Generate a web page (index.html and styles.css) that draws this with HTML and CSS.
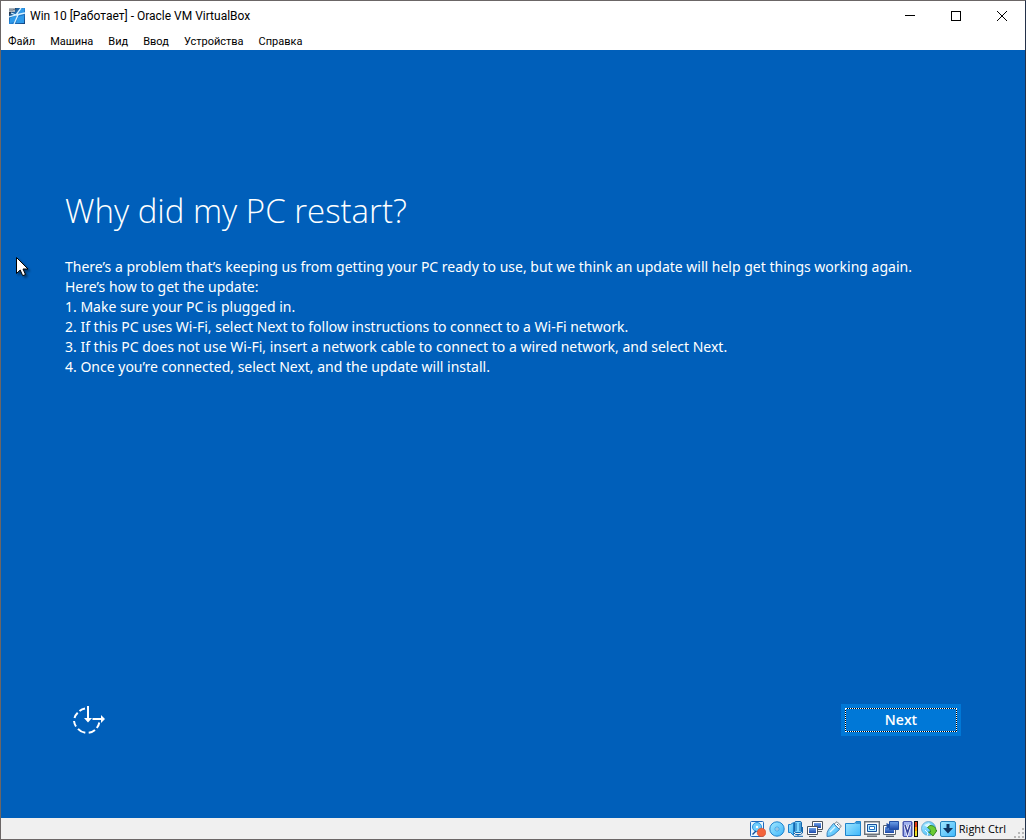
FILE: index.html
```
<!DOCTYPE html>
<html lang="ru">
<head>
  <meta charset="UTF-8" />
  <meta name="viewport" content="width=device-width, initial-scale=1.0"/>
  <title>Win 10 [Работает] - Oracle VM VirtualBox</title>
  <link rel="stylesheet" href="styles.css">
</head>
<body>
  <div class="window">
    <header class="title-bar">
      <svg class="app-icon" viewBox="0 0 16 16" aria-hidden="true">
        <defs>
          <linearGradient id="winBg" x1="0" y1="0" x2="1" y2="1">
            <stop offset="0" stop-color="#1c2c42"/>
            <stop offset="0.5" stop-color="#2388df"/>
            <stop offset="1" stop-color="#123e78"/>
          </linearGradient>
        </defs>
        <rect width="16" height="16" fill="#24364e"/>
        <path d="M7 0h9v16H0V7z" fill="url(#winBg)"/>
        <path d="M11 1l4-1v5l-5 2zM1 10l5-2 2 1-3 5-4 1zM9 9l6-2v8l-8 0z" fill="#2f9bea"/>
        <path d="M2 5l5 2 5-7M0 9l7-2 9-2M9 7l-4 9" fill="none" stroke="#d8f2ff" stroke-width="1.3"/>
        <rect width="6" height="4" fill="#aeb6bd"/>
        <path d="M1 1v2M3 1v2M4 1.500h2" stroke="#59636e" stroke-width="0.700"/>
      </svg>
      <span class="title">Win 10 [Работает] - Oracle VM VirtualBox</span>
      <div class="window-controls">
        <button type="button" aria-label="Свернуть">
          <svg viewBox="0 0 10 10" shape-rendering="crispEdges"><path d="M0 4.500h10" stroke="#000"/></svg>
        </button>
        <button type="button" aria-label="Развернуть">
          <svg viewBox="0 0 10 10" shape-rendering="crispEdges"><path d="M.5.5h9v9h-9z" fill="none" stroke="#000"/></svg>
        </button>
        <button type="button" aria-label="Закрыть">
          <svg viewBox="0 0 10 10"><path d="M0 0l10 10M10 0L0 10" stroke="#000"/></svg>
        </button>
      </div>
    </header>

    <nav class="menu-bar">
      <a href="#">Файл</a>
      <a href="#">Машина</a>
      <a href="#">Вид</a>
      <a href="#">Ввод</a>
      <a href="#">Устройства</a>
      <a href="#">Справка</a>
    </nav>

    <main class="screen" lang="en">
      <h1>Why did my PC restart?</h1>
      <p>There’s a problem that’s keeping us from getting your PC ready to use, but we think an update will help get things working again.</p>
      <p>Here’s how to get the update:</p>
      <p>1. Make sure your PC is plugged in.</p>
      <p>2. If this PC uses Wi-Fi, select Next to follow instructions to connect to a Wi-Fi network.</p>
      <p>3. If this PC does not use Wi-Fi, insert a network cable to connect to a wired network, and select Next.</p>
      <p>4. Once you’re connected, select Next, and the update will install.</p>

      <div class="actions">
        <button type="button" class="ease-button" aria-label="Ease of Access">
          <svg viewBox="0 0 34 30" fill="none" stroke="#fff" stroke-width="2">
            <path d="M14 3.500A12.500 12.500 0 0 0 8.500 6M6.700 7.800A12.500 12.500 0 0 0 3.500 13M3 16A12.500 12.500 0 0 0 5 21.500M7 23.800A12.500 12.500 0 0 0 14.300 27.800M17.700 27.800A12.500 12.500 0 0 0 24 25M25.800 23A12.500 12.500 0 0 0 28.300 17.500"/>
            <path d="M17 1v13M21.500 14H31"/>
            <path d="M13 13h8l-4 4.500zM30 10v8l4-4z" fill="#fff" stroke="none"/>
          </svg>
        </button>
        <button type="button" class="next-button"><span>Next</span></button>
      </div>

      <svg class="cursor" viewBox="0 0 14 20" aria-hidden="true">
        <path d="M.5.5v16l3.700-3.500 2.500 5.700 2.800-1.200L7 12h5z" fill="#fff" stroke="#000"/>
      </svg>
    </main>

    <footer class="status-bar">
      <!-- shared gradients for the device icons -->
      <svg class="defs" aria-hidden="true">
        <defs>
          <linearGradient id="sky" x1="0" y1="0" x2="1" y2="1">
            <stop offset="0" stop-color="#a5e8ff"/>
            <stop offset="1" stop-color="#3cb6fa"/>
          </linearGradient>
          <linearGradient id="navy" x1="0" y1="0" x2="0" y2="1">
            <stop offset="0" stop-color="#6fa2ea"/>
            <stop offset="1" stop-color="#1c48a8"/>
          </linearGradient>
        </defs>
      </svg>

      <svg viewBox="0 0 16 16" role="img" aria-label="Hard disk">
        <rect x="0.500" y="0.500" width="13" height="15" rx="1" fill="#e9f7ff" stroke="#1d68bb"/>
        <circle cx="7" cy="6" r="4.500" fill="#6fcdfc" stroke="#2e91dc"/>
        <circle cx="7" cy="6" r="1.200" fill="#fff"/>
        <path d="M2.500 13.500L6 10" stroke="#164f96" stroke-width="1.500"/>
        <circle cx="11.500" cy="11.500" r="4.300" fill="#f3643c" stroke="#d24424" stroke-width="0.600"/>
      </svg>
      <svg viewBox="0 0 16 16" role="img" aria-label="Optical disk">
        <circle cx="8" cy="8" r="7.200" fill="url(#sky)" stroke="#1c82cd"/>
        <circle cx="8" cy="8" r="2" fill="#e2f8ff" stroke="#2b91da" stroke-width="0.800"/>
        <circle cx="8" cy="8" r="0.700" fill="#1769ac"/>
      </svg>
      <svg viewBox="0 0 16 16" role="img" aria-label="Audio">
        <path d="M.5 3.500h2l3-2v13l-3-3h-2z" fill="url(#sky)" stroke="#1c7cc6"/>
        <rect x="6.500" y="0.500" width="7" height="11" rx="1.500" fill="#7ed6ff" stroke="#1467ad"/>
        <path d="M7 3h2M7 5h2M7 7h2M7 9h2M11 3h2M11 5h2M11 7h2M11 9h2" stroke="#1467ad"/>
        <path d="M14.500 6v6l-2 1.500h-5L6 12M10 13v2M6 15.300h9" fill="none" stroke="#1467ad"/>
      </svg>
      <svg viewBox="0 0 16 16" role="img" aria-label="Network">
        <path d="M5.500.5h10v8h-10z" fill="#fff" stroke="#4b535d"/>
        <path d="M7 2h7v5H7z" fill="url(#navy)"/>
        <path d="M11 10.500h4" stroke="#59616a"/>
        <path d="M.5 5.500h10v8H.5z" fill="#fff" stroke="#4b535d"/>
        <path d="M2 7h7v5H2z" fill="url(#navy)"/>
        <path d="M2 15.500h7" stroke="#59616a"/>
      </svg>
      <svg viewBox="0 0 16 16" role="img" aria-label="USB">
        <path d="M11 .7L15.300 5 13 8 8 3z" fill="#f6fafc" stroke="#7b858d"/>
        <path d="M7.500 2.500l6 6L8 13.500q-3 2-7 2-.5-4 1.500-7z" fill="url(#sky)" stroke="#3a83bd"/>
        <path d="M4 11l5-5" stroke="#d9f5ff" stroke-width="1.500"/>
        <path d="M11 3l1 1M12.500 4.500l.8.800" stroke="#59636e"/>
      </svg>
      <svg viewBox="0 0 16 16" role="img" aria-label="Shared folders">
        <path d="M.5 14.500v-12h9l1.500-2h4.500v14z" fill="url(#sky)" stroke="#1d83cc"/>
        <path d="M10.500 2h4.500" stroke="#2684ca" stroke-width="1.500"/>
      </svg>
      <svg viewBox="0 0 16 16" role="img" aria-label="Display">
        <path d="M.7.700h14.600v12.600H.7z" fill="#fff" stroke="#6b737b" stroke-width="1.400"/>
        <path d="M3.500 3.500h9v7h-9z" fill="#b8edff" stroke="#174f9c"/>
        <path d="M5.500 5.500h5v3h-5z" fill="#fff" stroke="#2472c4"/>
        <path d="M3 15.200h10" stroke="#6b737b" stroke-width="1.500"/>
      </svg>
      <svg viewBox="0 0 16 16" role="img" aria-label="Recording">
        <path d="M.5 4.500h12v9H.5z" fill="#fff" stroke="#5b6570"/>
        <path d="M2 6h9v6H2z" fill="url(#navy)"/>
        <path d="M3 15.300h8" stroke="#5b6570" stroke-width="1.400"/>
        <path d="M6.500.5h9v8h-9z" fill="url(#navy)" stroke="#2350a5"/>
        <path d="M3.500 2l3 1.500v3l-3 1.500z" fill="#2350a5"/>
      </svg>
      <svg viewBox="0 0 16 16" role="img" aria-label="Virtualization">
        <path d="M0 2h11M0 4h11M0 6h11M0 8h11M0 10h11M0 12h11M0 14h11" stroke="#4b58b0"/>
        <path d="M1.500.5h8v15h-8z" fill="#9fb0ee" stroke="#4b58b0"/>
        <path d="M3 4l2.500 8L8 4" fill="none" stroke="#fff" stroke-width="3"/>
        <path d="M3 4l2.500 8L8 4" fill="none" stroke="#39449c" stroke-width="1.600"/>
        <rect x="12" y="0" width="4" height="16" fill="#111"/>
        <rect x="13" y="1" width="2" height="5" fill="#e63b18"/>
        <rect x="13" y="6" width="2" height="4" fill="#ffa000"/>
        <rect x="13" y="10" width="2" height="5" fill="#e9dd23"/>
      </svg>
      <svg viewBox="0 0 16 16" role="img" aria-label="Mouse integration">
        <circle cx="7.500" cy="7.500" r="7" fill="url(#sky)" stroke="#5d9fca" stroke-width="0.800"/>
        <path d="M3 4l5-2 2 2-3 3z" fill="#d8f6ff"/>
        <path d="M6.500 6.500L9 4.500c4 0 6 2 6 5l1 0-4 5.500-4.500-4h2c0-2-1-3.500-3-4.500z" fill="#6ccb33" stroke="#2f7d1c" stroke-width="0.900"/>
        <path d="M4 9l3 3-1 3" fill="none" stroke="#e8faff"/>
      </svg>
      <svg viewBox="0 0 16 16" role="img" aria-label="Host key">
        <rect x="0.500" y="0.500" width="15" height="15" rx="1.500" fill="url(#sky)" stroke="#2884bd"/>
        <path d="M6.500 3h3v4H13l-5 5.500L3 7h3.500z" fill="#103460"/>
      </svg>
      <span class="host-key">Right Ctrl</span>
      <svg class="grip" viewBox="0 0 11 11" fill="#b8b8b8" aria-hidden="true">
        <path d="M8 0h2v2H8zM4 4h2v2H4zM8 4h2v2H8zM0 8h2v2H0zM4 8h2v2H4zM8 8h2v2H8z"/>
      </svg>
    </footer>
  </div>
</body>
</html>
```
FILE: styles.css
```
* {
  box-sizing: border-box;
}

body {
  margin: 0;
  background-color: #fff;
  color: #000;
  font-family: "Open Sans", "Noto Sans", sans-serif;
  font-size: 12px;
}

button {
  border: none;
  padding: 0;
  background: none;
  font-family: inherit;
}

svg {
  display: block;
  flex: none;
}

.window {
  display: flex;
  flex-direction: column;
  min-height: 100vh;
  border: 1px solid #6b6666;
  border-right-color: #24324a;
}

.title-bar {
  display: flex;
  align-items: center;
  height: 29px;
  padding-left: 8px;
  gap: 5px;
}

.app-icon {
  width: 16px;
  height: 16px;
}

.title {
  flex: 1;
  white-space: nowrap;
  font-family: Roboto, sans-serif;
  font-size: 12px;
}

.window-controls {
  display: flex;
}

.window-controls button {
  display: flex;
  align-items: center;
  justify-content: center;
  width: 46px;
  height: 29px;
}

.window-controls svg {
  width: 10px;
  height: 10px;
}

.menu-bar {
  display: flex;
  align-items: center;
  gap: 15px;
  height: 20px;
  padding: 2px 7px 0;
}

.menu-bar a {
  color: #000;
  font-family: Roboto, sans-serif;
  font-size: 11px;
  text-decoration: none;
}

.screen {
  position: relative;
  display: flex;
  flex-direction: column;
  flex: 1;
  padding: 136px 64px 82px;
  background-color: #005fba;
  color: #fff;
}

.screen h1 {
  margin: 0 0 21px;
  font-size: 33px;
  font-weight: 300;
  line-height: 50px;
}

.screen p {
  margin: 0;
  font-family: "Noto Sans", sans-serif;
  font-size: 14px;
  line-height: 20px;
}

.actions {
  display: flex;
  align-items: center;
  justify-content: space-between;
  margin-top: auto;
}

.ease-button {
  margin-left: 6px;
}

.ease-button svg {
  width: 34px;
  height: 30px;
}

.next-button {
  width: 120px;
  height: 32px;
  padding: 4px;
  background-color: #0078d7;
  color: #fff;
  font-size: 14px;
  font-weight: 600;
}

/* black shows between the white dots of the focus frame */
.next-button span {
  display: block;
  border: 1px dotted #fff;
  background: linear-gradient(#0078d7, #0078d7) padding-box, #000 border-box;
  line-height: 22px;
}

.cursor {
  position: absolute;
  top: 207px;
  left: 15px;
  width: 14px;
  height: 20px;
  filter: drop-shadow(2px 2px 1px rgba(0,0,0,0.4));
}

.status-bar {
  display: flex;
  align-items: center;
  justify-content: flex-end;
  gap: 3px;
  height: 21px;
  background-color: #f0f0f0;
}

.status-bar svg {
  width: 16px;
  height: 16px;
}

.status-bar .defs {
  position: absolute;
  width: 0;
  height: 0;
}

.host-key {
  font-size: 11px;
  white-space: nowrap;
}

.status-bar .grip {
  align-self: flex-end;
  width: 11px;
  height: 11px;
  margin-left: 5px;
}
```
